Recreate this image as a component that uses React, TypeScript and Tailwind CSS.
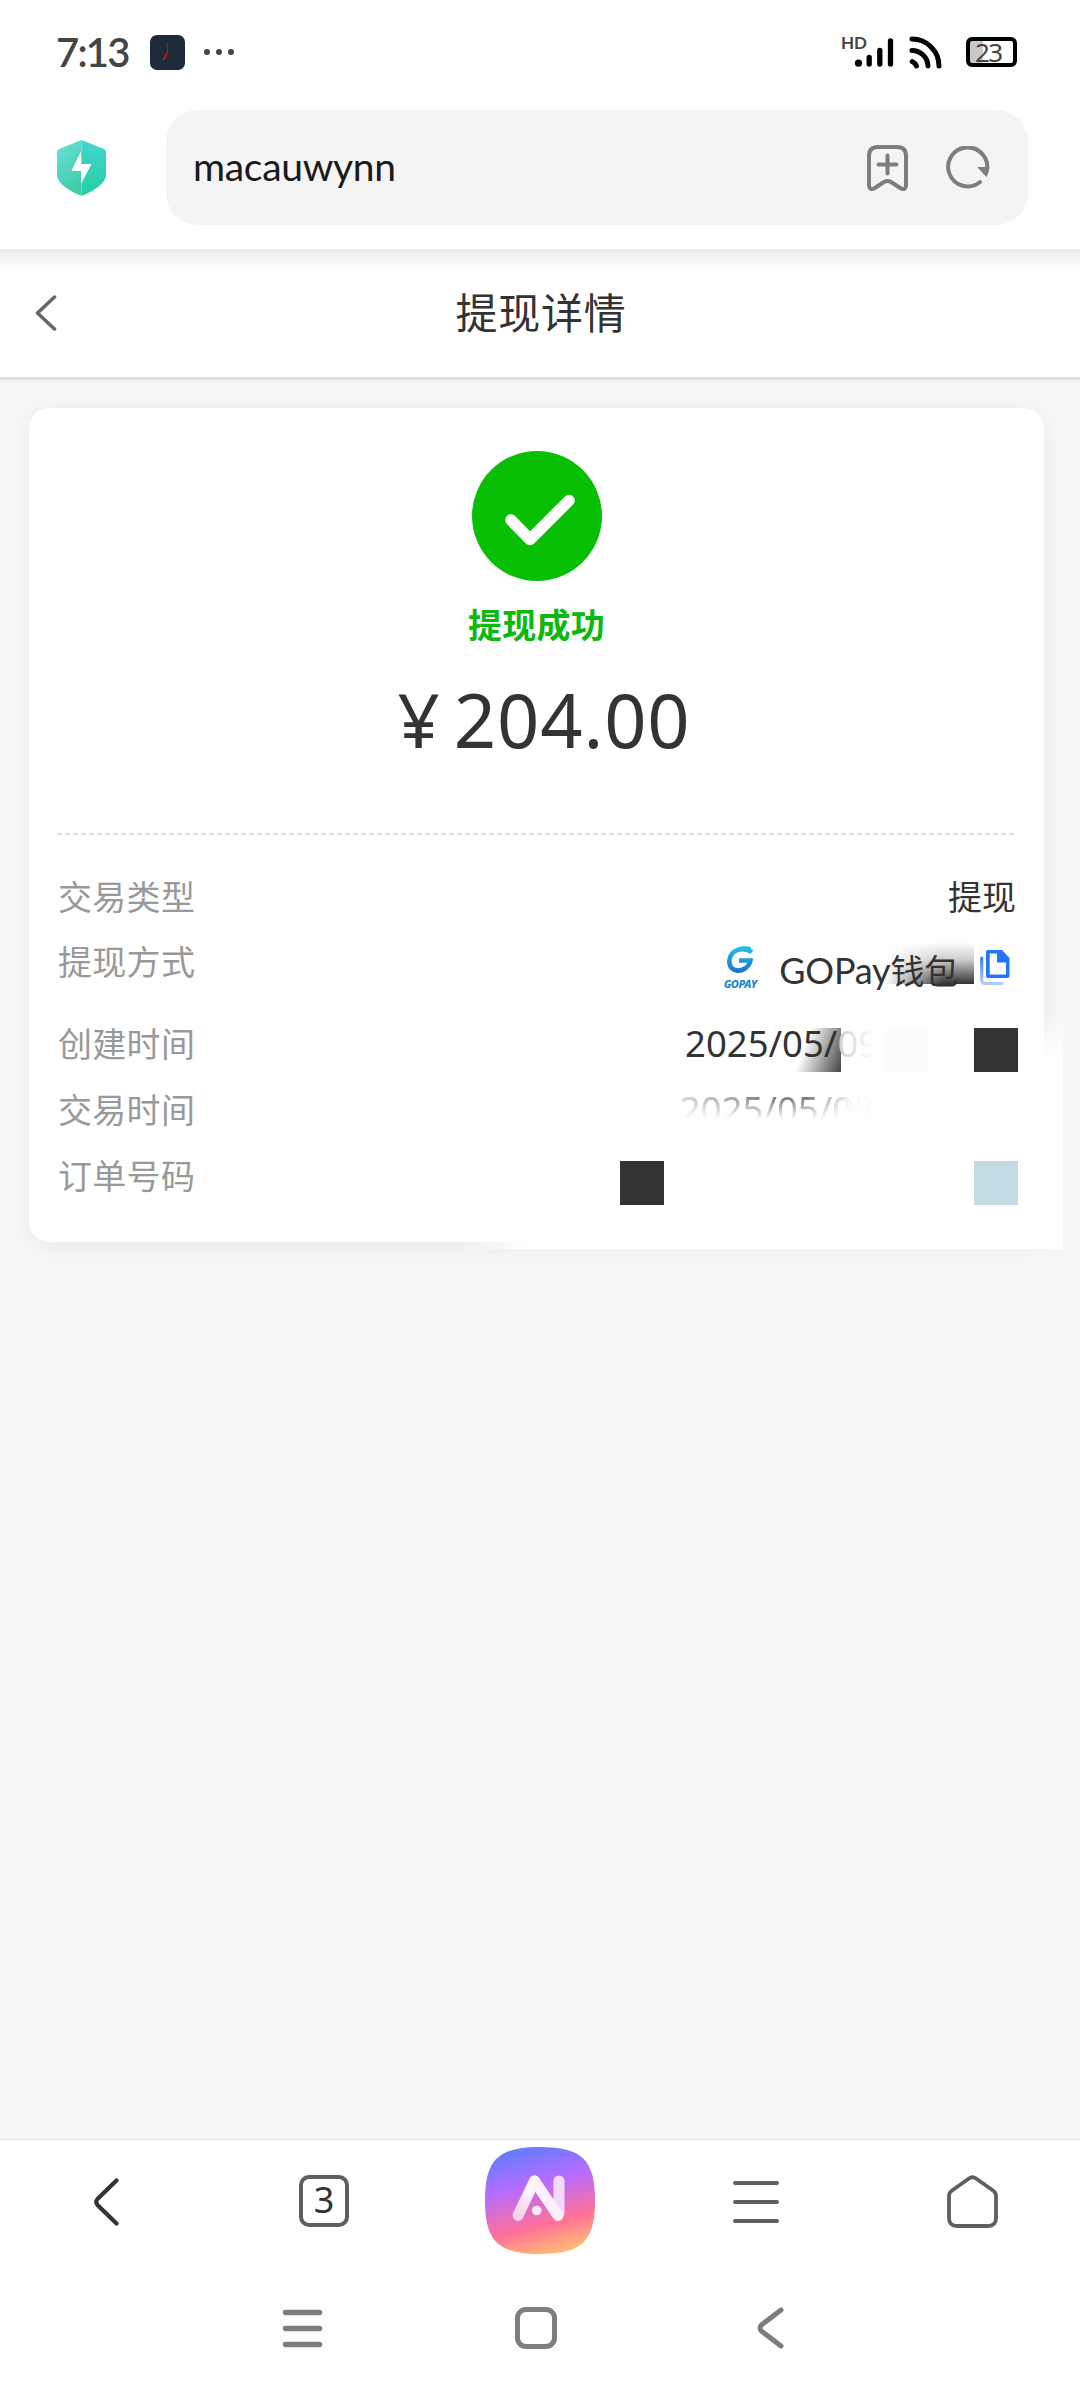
import type { ReactNode } from "react";

const LATO = "font-[Lato,'Noto_Sans_CJK_SC',sans-serif]";
const NOTO = "font-['Noto_Sans','Noto_Sans_CJK_SC',sans-serif]";
const CJK = "font-['Noto_Sans_CJK_SC',sans-serif]";

function StatusBar() {
  return (
    <div className="flex h-[104px] items-center pl-[56px] pr-[63px]">
      <span className={`${LATO} w-[94px] text-[40px] font-semibold leading-none tracking-[-1.8px] text-[#444]`}>
        7:13
      </span>
      <svg width="35" height="35" viewBox="0 0 35 35">
        <rect width="35" height="35" rx="7" fill="#1e2939" />
        <path d="M17.5 7v10" stroke="#374455" strokeWidth="1" />
        <path d="M17.5 17.5l-4 7" stroke="#a01c26" strokeWidth="2.2" strokeLinecap="round" />
      </svg>
      <div className="ml-[19px] flex gap-1.5">
        <i className="h-1.5 w-1.5 rounded-full bg-[#444]" />
        <i className="h-1.5 w-1.5 rounded-full bg-[#444]" />
        <i className="h-1.5 w-1.5 rounded-full bg-[#444]" />
      </div>
      <div className="ml-auto flex items-center">
        <span className={`${LATO} mb-5 text-[17px] font-bold leading-none text-[#444]`}>HD</span>
        <svg className="-ml-3.5" width="42" height="32" viewBox="0 0 42 32">
          <g stroke="#000" strokeWidth="5.3" strokeLinecap="round">
            <path d="M16.2 21.5v6.500M26.8 14.5v13.500M37.500 5v23" />
          </g>
          <circle cx="5.500" cy="27.200" r="3.600" />
        </svg>
        <svg className="ml-[14px]" width="34" height="34" viewBox="0 0 34 34" fill="none" stroke="#000" strokeWidth="5" strokeLinecap="round">
          <path d="M3 4A27 27 0 0 1 30 31M3 15.500A16 16 0 0 1 19 31M3.200 26.500A9 9 0 0 1 7.500 31" />
        </svg>
        <div className="ml-[23px] flex h-[30px] w-[51px] items-center rounded-md border-4 border-black bg-linear-to-r from-[#c8c8c8] from-30% to-white to-30%">
          <span className={`${NOTO} ml-[5px] pb-px text-[26px] leading-none tracking-[-1.5px] text-[#444]`}>23</span>
        </div>
      </div>
    </div>
  );
}

function AddressBar() {
  return (
    <div className="flex h-[145px] items-start pl-[57px] pr-[52px] pt-1.5">
      <svg className="mt-[30px]" width="49" height="56" viewBox="0 0 49 56">
        <defs>
          <linearGradient id="shieldL" x1="0" y1="0" x2="0.4" y2="1">
            <stop offset="0" stopColor="#6cdedd" />
            <stop offset="1" stopColor="#3fcfa8" />
          </linearGradient>
          <linearGradient id="shieldR" x1="0" y1="0" x2="0" y2="1">
            <stop offset="0" stopColor="#42d6d0" />
            <stop offset="1" stopColor="#25cea0" />
          </linearGradient>
        </defs>
        <path d="M24.500 0L2 9Q0 10 0 12V35C0 43 12 51 24.500 56Z" fill="url(#shieldL)" />
        <path d="M24.500 0L47 9Q49 10 49 12V35C49 43 37 51 24.500 56Z" fill="url(#shieldR)" />
        <path d="M24 11L14.500 31H24V44L34.500 24H24Z" fill="#fff" />
      </svg>
      <div className="ml-[60px] flex h-[115px] flex-1 items-center rounded-[32px] bg-[#f4f4f4] pl-[27px] pr-[38px]">
        <span className={`${LATO} pb-[3px] text-[39px] leading-none tracking-[-0.3px] text-[#1a1a1a]`}>macauwynn</span>
        <svg className="ml-auto" width="41" height="46" viewBox="0 0 41 46" fill="none" stroke="#7d7d7d" strokeWidth="4" strokeLinecap="round" strokeLinejoin="round">
          <path d="M2 11Q2 2 11 2H30Q39 2 39 11V40Q39 45.500 34 43.500L24 37Q20.500 35 17 37L7 43.500Q2 45.500 2 40Z" />
          <path d="M20.500 10.500v18M11.500 19.500h18" />
        </svg>
        <svg className="ml-[38px]" width="44" height="44" viewBox="0 0 44 44">
          <path d="M34 36A19.500 19.500 0 1 1 40.500 26" fill="none" stroke="#7d7d7d" strokeWidth="4" strokeLinecap="round" />
          <path d="M32 21.500h11l-2.500 9z" fill="#7d7d7d" stroke="#7d7d7d" strokeLinejoin="round" />
        </svg>
      </div>
    </div>
  );
}

function PageHeader() {
  return (
    <div className="h-[131px] border-b-[3px] border-[#e0e0e0] bg-linear-to-b from-[#eaeaea] to-white to-[21px]">
      <div className="flex h-full items-center px-[35px]">
        <svg width="22" height="36" viewBox="0 0 22 36" fill="none" stroke="#666" strokeWidth="3.500" strokeLinecap="round" strokeLinejoin="round">
          <path d="M19.500 2L2.500 18L19.500 34" />
        </svg>
        <h1 className={`${CJK} flex-1 pb-[5px] pr-5 text-center text-[42px] leading-none tracking-[0.8px] text-[#333]`}>
          提现详情
        </h1>
      </div>
    </div>
  );
}

function GoPayLogo() {
  return (
    <span className="flex w-[36px] flex-col items-center">
      <svg width="28" height="28" viewBox="0 0 28 28" fill="none">
        <defs>
          <linearGradient id="gopay" x1="0" y1="0" x2="0" y2="1">
            <stop offset="0" stopColor="#27b9e4" />
            <stop offset="1" stopColor="#1878cf" />
          </linearGradient>
        </defs>
        <path d="M26 6C17 0 5 4 3.500 13.500C2 24 12 27 19 22.500C22.500 20 24 18 24.500 14.500H13" stroke="url(#gopay)" strokeWidth="4.600" />
        <path d="M6 6Q14 -1 25 2" stroke="#27b9e4" strokeWidth="1.800" />
      </svg>
      <span className="mt-1 font-['Noto_Sans',sans-serif] text-[11px] font-extrabold italic leading-none tracking-[-0.4px] text-[#1b86c8]">
        GOPAY
      </span>
    </span>
  );
}

function CopyIcon() {
  return (
    <svg width="30" height="36" viewBox="0 0 30 36">
      <defs>
        <linearGradient id="copyBack" x1="0" y1="0" x2="0" y2="1">
          <stop offset="0" stopColor="#3b82f6" />
          <stop offset="1" stopColor="#b4cdfb" />
        </linearGradient>
      </defs>
      <path d="M1.700 8V30Q1.700 33.500 5 33.500H22" fill="none" stroke="url(#copyBack)" strokeWidth="3.200" strokeLinecap="round" />
      <path d="M8 0H22L29.500 8V26Q29.500 28 27.500 28H8Q6 28 6 26V2Q6 0 8 0Z" fill="#2476f8" />
      <path d="M9.700 3.500H17V12.500H26V24.500H9.700Z" fill="#fff" />
    </svg>
  );
}

function Row({ label, className, children }: { label: string; className: string; children?: ReactNode }) {
  return (
    <div className={`flex items-start justify-between ${className}`}>
      <span className={`${CJK} text-[34px] leading-[48px] tracking-[0.3px] text-[#999]`}>{label}</span>
      {children}
    </div>
  );
}

function DetailCard() {
  return (
    <div className="relative isolate ml-[29px] mt-7 h-[834px] w-[1015px] rounded-[20px] bg-white px-7 shadow-[0_4px_24px_rgba(0,0,0,0.06)]">
      {/* soft white spill past the card's bottom right corner */}
      <div className="absolute left-[430px] top-[605px] -z-10 h-[236px] w-[604px] bg-linear-to-r from-transparent to-white to-[70px] mask-t-from-80% mask-t-to-100%" />

      <div className="flex flex-col items-center pt-[43px]">
        <svg width="130" height="130" viewBox="0 0 130 130">
          <circle cx="65" cy="65" r="65" fill="#08bf06" />
          <path d="M39 69L58 88.500L97 49.500" fill="none" stroke="#fff" strokeWidth="11.500" strokeLinecap="round" strokeLinejoin="round" />
        </svg>
        <p className={`${CJK} mt-[25px] text-[34px] font-bold leading-[36px] tracking-[0.3px] text-[#0cb80b]`}>提现成功</p>
        <p className={`${NOTO} mt-[31px] flex h-[94px] gap-3.5 pl-[15px] text-[74px] leading-[94px] text-[#333]`}>
          <span>¥</span>
          <span className="tracking-[0.9px]">204.00</span>
        </p>
      </div>

      <div className="mt-[66px] h-0.5 bg-[repeating-linear-gradient(to_right,#ddd_0_5px,transparent_5px_8px)]" />

      <div className="pl-px pt-[37px]">
        <Row label="交易类型" className="h-[65px]">
          <span className={`${CJK} text-[34px] leading-[48px] text-[#333]`}>提现</span>
        </Row>
        <Row label="提现方式" className="h-[82px]">
          <div className="relative flex h-[61px] items-center pr-[6px]">
            <div className="absolute bottom-[14px] right-[42px] h-[44px] w-[89px] bg-[linear-gradient(to_bottom,transparent_5%,#0003_45%,#000c_100%)] mask-l-from-35% mask-l-to-100%" />
            <GoPayLogo />
            <span className={`${LATO} relative ml-[21px] mr-[22px] mt-1 text-[36px] leading-none tracking-[-0.2px] text-[#333]`}>
              GOPay<span className={`${CJK} text-[34px]`}>钱包</span>
            </span>
            <CopyIcon />
          </div>
        </Row>
        <Row label="创建时间" className="h-[66px]">
          <div className="relative flex w-[330px]">
            <div className="absolute left-[100px] top-[9px] h-[44px] w-[55px] bg-linear-[110deg,transparent_35%,#444_100%]" />
            <span className={`${NOTO} relative -ml-px text-[36.500px] leading-[48px] text-[#333]`}>
              2025/05/<span className="bg-linear-to-r from-[#ccc] to-white to-90% bg-clip-text text-transparent">09</span>
            </span>
            <div className="absolute left-[199px] top-[9px] h-11 w-11 bg-[#fcfcfc]" />
            <div className="absolute left-[288px] top-[9px] h-11 w-11 bg-[#333]" />
          </div>
        </Row>
        <Row label="交易时间" className="h-[66px]">
          <span className={`${NOTO} mr-[142px] bg-[linear-gradient(to_right,#fffb,#fff0_45%,#fff0_65%,#fff_88%),linear-gradient(to_bottom,#777_25%,#fff_72%)] bg-clip-text text-[36.500px] leading-[48px] text-transparent`}>
            2025/05/0<span className="text-white">9</span>
          </span>
        </Row>
        <Row label="订单号码" className="h-[66px]">
          <div className="mr-[-2px] mt-2.5 flex w-[398px] justify-between">
            <div className="h-11 w-11 bg-[#333]" />
            <div className="h-11 w-11 bg-[#c3dbe2]" />
          </div>
        </Row>
      </div>
    </div>
  );
}

function BrowserToolbar() {
  return (
    <div className="grid h-[125px] grid-cols-5 border-t border-[#e3e3e3] bg-white">
      <div className="flex items-start justify-center pt-[38px]">
        <svg className="mr-1" width="26" height="48" viewBox="0 0 26 48" fill="none" stroke="#333" strokeWidth="4.200" strokeLinecap="round">
          <path d="M23.500 2.500L4.500 21Q2 24 4.500 27L23.500 45.500" />
        </svg>
      </div>
      <div className="flex items-start justify-center pt-[35px]">
        <div className={`${NOTO} flex h-[52px] w-[50px] items-center justify-center rounded-[10px] border-4 border-[#5f5f5f] pb-0.5 text-[36px] leading-none text-[#333]`}>
          3
        </div>
      </div>
      <div className="flex items-start justify-center pr-px pt-[7px]">
        <svg width="110" height="107" viewBox="0 0 110 107">
          <defs>
            <linearGradient id="ai" x1="0.35" y1="0" x2="0.62" y2="1">
              <stop offset="0.03" stopColor="#6a7bff" />
              <stop offset="0.35" stopColor="#b86cff" />
              <stop offset="0.72" stopColor="#ff7098" />
              <stop offset="1" stopColor="#ffbb76" />
            </linearGradient>
            <linearGradient id="leg" x1="0" y1="0" x2="0" y2="1">
              <stop offset="0" stopColor="#fff" />
              <stop offset="1" stopColor="#f5d3ee" />
            </linearGradient>
          </defs>
          <path d="M55 0C97 0 110 13 110 53.500C110 94 97 107 55 107C13 107 0 94 0 53.500C0 13 13 0 55 0Z" fill="url(#ai)" />
          <g fill="none" strokeWidth="11" strokeLinecap="round" strokeLinejoin="round">
            <path d="M33 68.500L49.500 34" stroke="url(#leg)" />
            <path d="M74 34V66" stroke="#f4d9fb" />
            <path d="M49.500 34L73 68.500" stroke="#fdf0f9" />
          </g>
          <circle cx="51.800" cy="63.500" r="4.800" fill="#fde7f3" />
        </svg>
      </div>
      <div className="flex items-start justify-center pt-[40px]">
        <svg width="46" height="44" viewBox="0 0 46 44" stroke="#5f5f5f" strokeWidth="4" strokeLinecap="round">
          <path d="M2 3h42M2 22h42M2 41h42" />
        </svg>
      </div>
      <div className="flex items-start justify-center pt-[35px]">
        <svg width="51" height="53" viewBox="0 0 51 53" fill="none" stroke="#5f5f5f" strokeWidth="3.800" strokeLinejoin="round">
          <path d="M22 3.500Q25.500 1 29 3.500L46 15.500Q49 17.500 49 21V43Q49 51 41 51H10Q2 51 2 43V21Q2 17.500 5 15.500Z" />
        </svg>
      </div>
    </div>
  );
}

function SystemNav() {
  return (
    <div className="flex h-[136px] items-start bg-white pl-[282px] pt-[43px]">
      <svg width="41" height="42" viewBox="0 0 41 42" stroke="#7d7d7d" strokeWidth="5.500" strokeLinecap="round">
        <path d="M3.500 5.500h34M3.500 21.500h34M3.500 37.500h34" />
      </svg>
      <div className="ml-[192px] h-[42px] w-[42px] rounded-[11px] border-[5px] border-[#7d7d7d]" />
      <svg className="ml-[200px]" width="27" height="42" viewBox="0 0 27 42" fill="none" stroke="#7d7d7d" strokeWidth="5" strokeLinecap="round">
        <path d="M24 3L5 17.500Q1 21 5 24.500L24 39" />
      </svg>
    </div>
  );
}

export default function App() {
  return (
    <div className="flex h-[2400px] w-[1080px] flex-col overflow-hidden bg-white">
      <StatusBar />
      <AddressBar />
      <PageHeader />
      <main className="flex-1 bg-[#f7f7f7]">
        <div className="flow-root">
          <DetailCard />
        </div>
      </main>
      <BrowserToolbar />
      <SystemNav />
    </div>
  );
}
